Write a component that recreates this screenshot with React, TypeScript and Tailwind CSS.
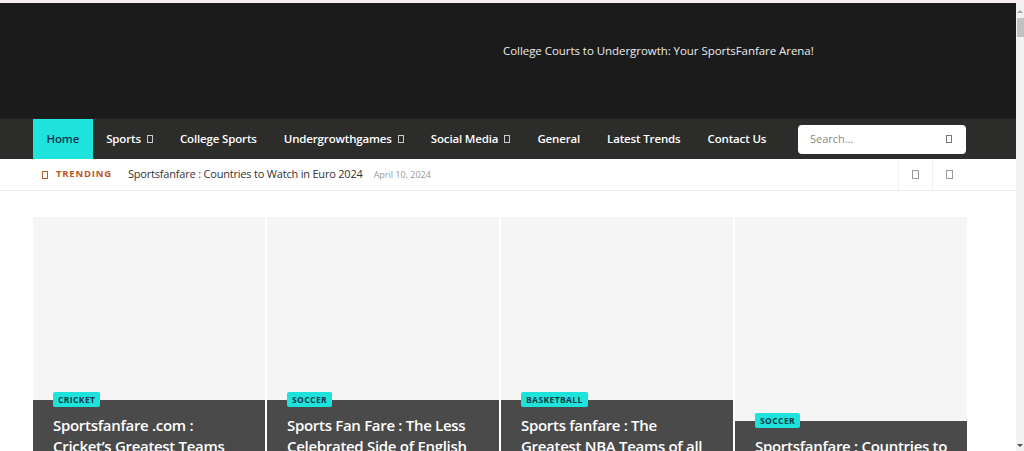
import * as React from "react";

const navItems = [
  { label: "Home", active: true },
  { label: "Sports", drop: true },
  { label: "College Sports" },
  { label: "Undergrowthgames", drop: true },
  { label: "Social Media", drop: true },
  { label: "General" },
  { label: "Latest Trends" },
  { label: "Contact Us" },
];

const posts = [
  {
    cat: "CRICKET",
    title: "Sportsfanfare .com : Cricket’s Greatest Teams Through the Ages",
  },
  {
    cat: "SOCCER",
    title: "Sports Fan Fare : The Less Celebrated Side of English Football",
  },
  {
    cat: "BASKETBALL",
    title: "Sports fanfare : The Greatest NBA Teams of all Time",
  },
  {
    cat: "SOCCER",
    title: "Sportsfanfare : Countries to Watch in Euro 2024",
  },
];

// missing-glyph box, the site's icon font never loaded
const Box = ({ className = "" }: { className?: string }) => (
  <span
    className={`inline-block w-[6px] h-[8px] border border-current ${className}`}
  />
);

const App = () => {
  return (
    <div className="w-[1024px] h-[451px] overflow-hidden bg-white font-['Open_Sans',sans-serif]">
      <div className="h-[3px] bg-[#fbeef3]" />
      <div className="flex">
        <div className="flex-1">
          {/* header */}
          <header className="h-[115px] bg-[#1b1b1b]">
            <div className="pl-[503px] pt-[39px] text-[11.5px] tracking-[-0.05px] text-[#ececec]">
              College Courts to Undergrowth: Your SportsFanfare Arena!
            </div>
          </header>

          {/* nav */}
          <nav className="h-[41px] bg-[#2c2c2b] border-t border-[#232323]">
            <div className="ml-[33px] w-[933px] flex items-center h-full">
              <ul className="flex h-full">
                {navItems.map((n) => (
                  <li
                    key={n.label}
                    className={`flex items-center gap-[6px] px-[13.5px] h-full whitespace-nowrap text-[11.5px] tracking-[-0.15px] font-semibold ${
                      n.active
                        ? "bg-[#1ee3dc] text-[#0c3553]"
                        : "text-white"
                    }`}
                  >
                    {n.label}
                    {n.drop && <Box className="w-[6px] h-[7px] text-[#ccc]" />}
                  </li>
                ))}
              </ul>
              <div className="ml-auto w-[168px] h-[29px] bg-white rounded-[4px] flex items-center justify-between pl-[12px] pr-[14px]">
                <span className="text-[11px] text-[#888]">Search...</span>
                <Box className="w-[6px] h-[8px] text-[#777]" />
              </div>
            </div>
          </nav>

          {/* trending */}
          <div className="h-[32px] border-b border-[#ececec]">
            <div className="ml-[33px] w-[933px] h-full flex items-center">
              <div className="flex items-center gap-[8px] pl-[9px] w-[95px] text-[#bd561e]">
                <Box className="w-[6px] h-[7px]" />
                <span className="text-[9.5px] font-bold tracking-[0.8px]">
                  TRENDING
                </span>
              </div>
              <span className="text-[11px] tracking-[-0.2px] text-[#333]">
                Sportsfanfare : Countries to Watch in Euro 2024
              </span>
              <span className="ml-[11px] text-[9px] text-[#999]">
                April 10, 2024
              </span>
              <div className="ml-auto flex h-full">
                <div className="w-[34px] h-full flex items-center justify-center border-l border-[#f0f0f0] text-[#999]">
                  <Box className="w-[7px] h-[9px]" />
                </div>
                <div className="w-[34px] h-full flex items-center justify-center border-l border-[#f0f0f0] text-[#999]">
                  <Box className="w-[7px] h-[9px]" />
                </div>
              </div>
            </div>
          </div>

          {/* featured cards */}
          <div className="ml-[33px] w-[934px] mt-[26px] grid grid-cols-4 gap-[2px]">
            {posts.map((p, i) => (
              <article
                key={i}
                className="h-[280px] bg-[#f5f5f5] flex flex-col justify-end"
              >
                <div className="relative bg-[#4a4a4a] pt-[15px] pb-[19px] pl-[20px] pr-[16px]">
                  <span className="absolute left-[20px] -top-[8px] bg-[#1ee3dc] rounded-[2px] px-[5px] h-[15px] leading-[15px] text-[8.5px] font-bold tracking-[0.4px] text-[#0e3a44]">
                    {p.cat}
                  </span>
                  <h2 className="text-[15px] leading-[21px] tracking-[-0.3px] font-semibold text-white">
                    {p.title}
                  </h2>
                </div>
              </article>
            ))}
          </div>
        </div>

        {/* scrollbar */}
        <div className="w-[8px] h-[448px] bg-[#f1f1f1] flex flex-col items-center">
          <div className="mt-[7px] w-0 h-0 border-l-[3px] border-r-[3px] border-b-[3px] border-l-transparent border-r-transparent border-b-[#a3a3a3]" />
          <div className="mt-[5px] w-[7px] ml-[1px] h-[19px] bg-[#c1c1c1]" />
          <div className="mt-auto mb-[4px] w-0 h-0 border-l-[3px] border-r-[3px] border-t-[3px] border-l-transparent border-r-transparent border-t-[#505050]" />
        </div>
      </div>
    </div>
  );
};

export default App;
